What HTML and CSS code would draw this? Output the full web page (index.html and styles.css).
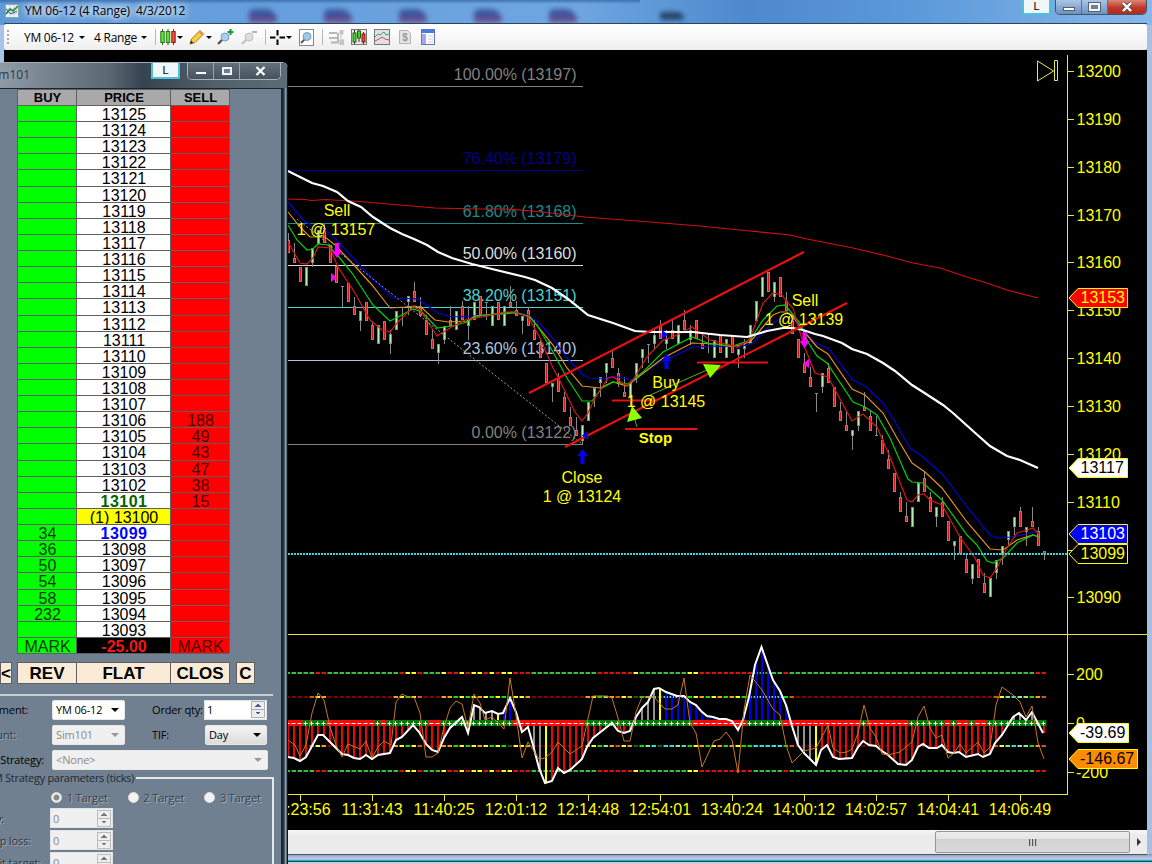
FILE: index.html
```html
<!DOCTYPE html>
<html lang="en">
<head>
    <meta charset="UTF-8">
    <title>YM 06-12 (4 Range) 4/3/2012</title>
    <link rel="stylesheet" href="styles.css">
</head>
<body>
    <div class="chart-window">
        <div class="titlebar">
            <svg class="app-icon" width="14" height="14" viewBox="0 0 14 14">
                <rect x=".5" y=".5" width="13" height="13" fill="#eef4fa" stroke="#8aa"/>
                <path d="M1 5h12M1 9h12M5 1v12M9 1v12" stroke="#b9cbe0"/>
                <path d="M1 10l4-5 3 2 5-5" stroke="#1c8a2a" stroke-width="1.6" fill="none"/>
                <path d="M1 5l5 5 6-3" stroke="#35507c" fill="none"/>
            </svg>
            <span class="title">YM 06-12 (4 Range)&nbsp; 4/3/2012</span>
            <i class="blob"></i><i class="blob"></i><i class="blob"></i><i class="blob"></i><i class="blob"></i>
            <span class="blob blob-dark"></span>
            <div class="window-buttons">
                <span class="link-button">L</span>
                <div class="controls">
                    <span class="control"><i class="min"></i></span>
                    <span class="control"><i class="max"></i></span>
                    <span class="control close"><svg width="12" height="10" viewBox="0 0 12 10"><path d="M2 1l8 8M10 1l-8 8" stroke="#555" stroke-width="4"/><path d="M2 1l8 8M10 1l-8 8" stroke="#fff" stroke-width="2.4"/></svg></span>
                </div>
            </div>
        </div>

        <div class="toolbar">
            <span class="grip"></span>
            <span class="tool-text instrument">YM 06-12</span><i class="caret"></i>
            <span class="tool-text range">4 Range</span><i class="caret"></i>
            <i class="sep"></i>
            <svg class="icon candles" width="16" height="16" viewBox="0 0 16 16">
                <path d="M2.5 0v16M8 0v16M13.5 0v16" stroke="#444"/>
                <rect x=".8" y="2.5" width="3.4" height="11" fill="#5fe03c" stroke="#2a7a18"/>
                <rect x="6.3" y="2.5" width="3.4" height="11" fill="#5fe03c" stroke="#2a7a18"/>
                <rect x="11.8" y="2.5" width="3.4" height="11" fill="#f04a3c" stroke="#96201a"/>
            </svg><i class="caret"></i>
            <svg class="icon pencil" width="16" height="16" viewBox="0 0 16 16">
                <path d="M1 15l1.5-5L11 1.5 14.5 5 6 13.5z" fill="#f8cf3c" stroke="#a87a14"/>
                <path d="M11 1.5L14.5 5 13 6.5 9.5 3z" fill="#e88a6a"/>
                <path d="M1 15l1-3.4 2.4 2.4z" fill="#333"/>
            </svg><i class="caret"></i>
            <svg class="icon zoom-in" width="17" height="16" viewBox="0 0 17 16">
                <path d="M1 15l5-5" stroke="#555" stroke-width="2.4"/>
                <circle cx="8" cy="8" r="4" fill="#a6cff0" stroke="#7a9cba"/>
                <path d="M13.5 0v6M10.5 3h6" stroke="#119c2c" stroke-width="2"/>
            </svg>
            <svg class="icon zoom-out" width="17" height="16" viewBox="0 0 17 16">
                <path d="M1 15l5-5" stroke="#c4c4c4" stroke-width="2.4"/>
                <circle cx="8" cy="8" r="4" fill="#dcdcdc" stroke="#c0c0c0"/>
                <path d="M11 3h5" stroke="#b4b4b4" stroke-width="2"/>
            </svg>
            <i class="sep"></i>
            <svg class="icon cross" width="15" height="15" viewBox="0 0 15 15">
                <path d="M7.5 0v5.5M7.5 9.5V15M0 7.500h5.500M9.500 7.500H15" stroke="#000" stroke-width="2"/>
            </svg><i class="caret"></i>
            <svg class="icon find" width="15" height="17" viewBox="0 0 15 17">
                <rect x=".5" y=".5" width="14" height="16" fill="#fff" stroke="#888"/>
                <path d="M2 14l4-4" stroke="#555" stroke-width="2"/>
                <circle cx="8" cy="7.500" r="4" fill="#9cc8ee" stroke="#7a9cba"/>
            </svg>
            <i class="sep"></i>
            <svg class="icon trader" width="15" height="15" viewBox="0 0 15 15">
                <path d="M0 3h8M0 8h8M2 12.500h8M9 3v9" stroke="#b8b8b8" stroke-width="2"/>
                <path d="M11 0h3v4h-3zM11 10h4v5h-4zM12 4v6" fill="#c4c4c4" stroke="#c4c4c4"/>
            </svg>
            <svg class="icon data" width="16" height="16" viewBox="0 0 16 16">
                <rect x=".5" y=".5" width="15" height="15" fill="#ececec" stroke="#777"/>
                <path d="M3.500 1v14M8 1v12M12.500 3v12" stroke="#333"/>
                <rect x="2" y="4" width="3" height="9" fill="#4ccf30" stroke="#1c6a10"/>
                <rect x="6.500" y="2" width="3" height="7" fill="#4ccf30" stroke="#1c6a10"/>
                <rect x="11" y="5" width="3" height="8" fill="#e8443a" stroke="#8c1812"/>
            </svg>
            <svg class="icon indicator" width="16" height="16" viewBox="0 0 16 16">
                <rect x=".5" y=".5" width="15" height="15" fill="#e2e2e2" stroke="#777"/>
                <path d="M1 8l3-3 2 1 4-3 2 3 3-1" stroke="#35a070" fill="none"/>
                <path d="M1 12l4-2 3-2 3 2 4 1" stroke="#e04848" fill="none"/>
            </svg>
            <svg class="icon dollar" width="12" height="14" viewBox="0 0 12 14">
                <path d="M.5.500h8l3 3v10H.500z" fill="#e4e4e4" stroke="#b4b4b4"/>
                <text x="6" y="11" text-anchor="middle" font-size="10" font-weight="bold" fill="#999">$</text>
            </svg>
            <svg class="icon props" width="14" height="16" viewBox="0 0 14 16">
                <rect x=".5" y=".5" width="13" height="15" fill="#fff" stroke="#6a72c0"/>
                <rect x="1" y="1" width="12" height="3" fill="#3f7fe8"/>
                <path d="M7 7h5M7 10h5M7 13h5" stroke="#c4c8ea"/>
                <rect x="1" y="5" width="4" height="10" fill="#a9a6e8"/>
            </svg>
        </div>

        <svg class="chart" width="1143" height="780" viewBox="4 50 1143 780">
            <!-- fibonacci levels -->
            <g class="fib">
                <g class="l100"><path d="M288 86.500H583"/><text x="576.500" y="80">100.00% (13197)</text></g>
                <g class="l76"><path d="M288 170.500H583"/><text x="576.500" y="164">76.40% (13179)</text></g>
                <g class="l61"><path d="M288 223.500H583"/><text x="576.500" y="217">61.80% (13168)</text></g>
                <g class="l50"><path d="M288 265.500H583"/><text x="576.500" y="259">50.00% (13160)</text></g>
                <g class="l38"><path d="M288 307.500H583"/><text x="576.500" y="301">38.20% (13151)</text></g>
                <g class="l23"><path d="M288 360.500H583"/><text x="576.500" y="354">23.60% (13140)</text></g>
                <g class="l100"><path d="M288 444.500H583"/><text x="576.500" y="438">0.00% (13122)</text></g>
            </g>

            <g id="candles"></g>

            <!-- moving averages -->
            <polyline class="ma long" points="288,199 305,199.5 312,200.5 325,199.5 360,201.5 400,205 435,208 480,209 505,209 532,211 560,214 585,217 650,222 700,226 740,230 790,235 807,239 853,248 887,256 913,263 940,268 967,277 987,283 1007,290 1038,298"/>
            <polyline class="ma blue" points="288,202 305,222 325,230 335,238 352,257 372,278 393,298 418,299 438,313 452,317 472,316 498,314 515,312 528,315 538,322 550,335 567,358 583,375 590,378 603,379 613,376 632,380 643,373 660,362 677,355 692,347 717,346 740,347 753,343 765,330 777,320 787,317 795,321 803,330 815,343 828,348 853,380 865,386 883,403 895,422 910,448 923,457 943,475 967,507 990,535 998,538 1010,537 1027,534 1033,532 1039,533"/>
            <polyline class="ma orange" points="288,212 300,227 310,237 325,237 335,245 352,263 372,285 390,308 405,307 415,306 422,308 435,320 448,322 467,321 475,316 515,312 530,317 553,345 567,368 582,386 600,388 613,382 627,386 637,378 650,368 663,358 692,343 717,344 733,347 750,342 762,328 773,315 780,312 787,312 793,317 807,335 817,347 828,354 852,389 865,395 883,413 897,438 912,463 925,472 942,488 967,522 990,549 1003,550 1017,540 1033,535 1039,537"/>
            <polyline class="ma green" points="288,225 297,240 307,250 313,249 318,244 328,245 338,256 352,273 373,305 390,321 398,317 413,309 422,312 437,328 452,326 467,322 475,317 485,315 515,313 528,316 537,325 553,352 567,378 582,401 592,401 602,388 613,382 628,384 643,372 663,352 692,337 710,344 733,346 750,340 763,320 777,306 785,305 800,323 808,342 817,356 827,363 853,402 865,407 877,415 890,438 908,479 912,482 923,483 942,500 967,535 977,545 987,561 993,563 1003,558 1017,543 1033,535 1039,537"/>
            <polyline class="ma fast" points="288,242 300,263 307,264 313,258 318,247 330,248 338,267 355,293 370,320 382,330 390,332 398,322 413,307 420,310 437,336 450,328 465,320 482,317 505,312 515,312 528,317 540,338 553,368 558,377 575,412 582,421 588,413 595,398 608,378 613,377 627,386 633,380 647,357 663,340 673,337 692,327 710,340 738,347 750,339 763,303 773,293 782,295 787,302 793,308 803,343 815,373 828,377 852,421 863,414 877,427 890,457 903,490 907,500 912,502 918,495 924,494 930,500 942,505 960,537 975,558 983,575 990,578 997,568 1007,548 1017,533 1027,530 1033,528 1039,534"/>
            <polyline class="ma slow" points="288,171 300,177 312,183 323,186 337,192 348,201 361,207 373,217 390,228 402,234 414,239 427,245 438,252 452,258 472,264 492,269 525,277 535,280 552,288 568,299 588,315 613,323 635,331 650,332 693,332 720,335 747,337 767,331 783,328 793,328 803,330 815,334 823,336 842,343 852,349 867,354 883,363 895,371 912,385 923,392 943,405 953,413 973,431 990,446 1007,456 1020,460 1038,468"/>

            <!-- drawings -->
            <path class="trade-line" d="M297 219L582 444"/>
            <path class="trend" d="M529 393L804 252M565 447L847 303M612 400.500H657M625 429H697M697 362.500H768"/>
            <path class="last-price" d="M288 554H1068"/>
            <path class="pointer-line" d="M648 396L707 370M632 410L637 427"/>
            <path class="pointer" d="M721 365L703 364 710 378zM632 406L627 422 642 418z"/>

            <path class="sell-mark" d="M335 243h4v8h3l-5 7-5-7h3zM331 273l6 4.500-6 4.500z"/>
            <path class="sell-mark" d="M802.500 332h4v9h3l-5 7-5-7h3zM809 359l-6 4.500 6 4.500z"/>
            <path class="buy-mark" d="M580.500 464h4v-8h3l-5-7-5 7h3zM588 431l-6 4.500 6 4.500z"/>
            <path class="buy-mark" d="M664.500 369h4v-8h3l-5-7-5 7h3zM662 330l6 4.500-6 4.500z"/>

            <g class="notes">
                <text x="337" y="216">Sell</text><text x="336" y="235">1 @ 13157</text>
                <text x="582" y="483">Close</text><text x="582" y="502">1 @ 13124</text>
                <text x="666" y="388">Buy</text><text x="666" y="407">1 @ 13145</text>
                <text x="805" y="306">Sell</text><text x="804" y="325">1 @ 13139</text>
                <text class="stop" x="655.500" y="443">Stop</text>
            </g>

            <!-- oscillator pane -->
            <g id="levels"></g>
            <g id="histogram"></g>
            <g id="zero"></g>
            <polyline id="trix" points="288,757 294,758 300,761 306,757 318,735 323,735 330,742 342,754 348,755 354,758 360,759 366,755 372,759 378,755 384,754 390,753 396,740 402,737 413,725 419,732 426,744 432,750 438,752 444,738 450,728 462,717 468,733 474,705 479,707 485,713 492,711 498,714 503,713 510,698 516,712 522,732 528,727 533,745 539,768 545,783 552,781 558,768 564,773 570,770 582,759 587,747 593,738 612,723 618,731 624,733 630,731 636,717 642,708 648,702 654,689 659,688 666,692 677,696 684,696 690,702 696,705 701,711 707,716 713,717 719,719 726,719 732,721 738,730 743,720 749,697 755,665 761.500,647 773,680 780,691 786,705 792,726 798,745 804,753 816,765 821,750 827,745 833,757 839,759 852,758 858,747 863,741 869,745 876,746 882,751 888,755 898,764 906,765 912,760 918,747 923,744 929,748 937,748 942,745 948,752 953,753 959,752 966,757 978,754 983,757 990,754 995,743 1002,735 1013,717 1019,713 1026,720 1032,712 1043,733"/>
            <polyline class="cci" points="288,740 295,745 300,756 306,745 312,713 318,693 324,700 330,727 336,745 342,757 348,744 360,749 366,741 372,758 378,747 384,741 391,745 396,702 402,694 408,697 414,697 420,713 426,757 432,757 438,753 444,727 450,708 456,701 462,704 468,728 474,694 480,703 485,720 492,717 504,729 510,678 516,715 522,758 528,742 539,759 545,758 552,752 558,742 570,754 582,746 587,723 593,696 607,696 612,698 618,718 624,741 630,741 636,712 642,697 654,697 665,709 672,709 678,705 684,678 690,723 696,733 702,767 714,741 720,739 726,732 732,740 738,773 744,710 750,675 762,690 773,709 780,715 786,745 792,763 804,751 816,748 822,737 828,725 833,748 840,753 847,752 852,749 858,733 864,705 870,728 876,737 882,754 888,755 900,752 912,742 918,717 924,706 930,728 936,738 942,735 948,758 954,753 960,744 966,753 978,742 984,753 990,747 996,705 1002,687 1013,695 1020,702 1026,717 1032,706 1038,743 1044,759"/>

            <!-- axes -->
            <path class="axis" d="M1067.500 55V794M288 634.500H1147M288 794.500H1068"/>
            <path class="axis" id="ticks"/>
            <path class="go-last" d="M1037.500 61V81L1053.500 71zM1054.500 60.500h3v20h-3z"/>
            <g id="labels" class="labels"></g>

            <g class="tags">
                <path d="M1069 298l9-9.500h49.500v19H1078z" fill="#f00"/><text x="1080.500" y="303" fill="#ff0">13153</text>
                <path d="M1069 468l9-9.500h49.500v19H1078z" fill="#fff"/><text x="1080.500" y="473" fill="#000">13117</text>
                <path d="M1069 534l9-9.500h49.500v19H1078z" fill="#00f"/><text x="1080.500" y="539" fill="#fff">13103</text>
                <path d="M1069 554l9-9.500h49.500v19H1078z" fill="#000"/><text x="1080.500" y="559" fill="#ff0">13099</text>
                <path d="M1069 733l9-9.500h50.500v19H1078z" fill="#fff"/><text x="1080" y="738" fill="#000">-39.69</text>
                <path d="M1069 759l9-9.500h59.500v19H1078z" fill="#ff8c00"/><text x="1080" y="764" fill="#000">-146.67</text>
            </g>
        </svg>

        <div class="scrollbar">
            <div class="thumb"><i></i><i></i><i></i></div>
            <span class="arrow"></span>
        </div>
    </div>

    <div class="dom-window">
        <div class="dom-title">
            <span class="account">Sim101</span>
            <span class="link-button">L</span>
            <div class="controls">
                <span class="control"><i class="min"></i></span>
                <span class="control"><i class="max"></i></span>
                <span class="control close"><svg width="11" height="10" viewBox="0 0 11 10"><path d="M1.500 1l8 8M9.500 1l-8 8" stroke="#fff" stroke-width="2.200"/></svg></span>
            </div>
        </div>
        <div class="dom-body">
            <div class="ladder" id="ladder">
                <b>BUY</b><b>PRICE</b><b>SELL</b>
            </div>
            <div class="actions">
                <span class="more">&lt;</span>
                <span class="rev">REV</span><span class="flat">FLAT</span><span class="clos">CLOS</span>
                <span class="c">C</span>
            </div>
            <div class="form">
                <div class="row r1">
                    <label>Instrument:</label>
                    <span class="combo short">YM 06-12<i class="caret"></i></span>
                    <span class="name">Order qty:</span>
                    <span class="spin">1<i class="updown"></i></span>
                </div>
                <div class="row r2">
                    <label>Account:</label>
                    <span class="combo short disabled">Sim101<i class="caret"></i></span>
                    <span class="name">TIF:</span>
                    <span class="combo tif">Day<i class="caret"></i></span>
                </div>
                <div class="row r3">
                    <label>ATM Strategy:</label>
                    <span class="combo wide disabled">&lt;None&gt;<i class="caret"></i></span>
                </div>
            </div>
            <div class="group">
                <div class="legend"><span>ATM Strategy parameters (ticks)</span></div>
                <div class="params">
                    <div class="targets">
                        <span><i class="radio on"></i>1 Target</span>
                        <span><i class="radio"></i>2 Target</span>
                        <span><i class="radio"></i>3 Target</span>
                    </div>
                    <div class="row p1"><label>Order qty:</label><span class="spin disabled">0<i class="updown"></i></span></div>
                    <div class="row p2"><label>Stop loss:</label><span class="spin disabled">0<i class="updown"></i></span></div>
                    <div class="row p3"><label>Profit target:</label><span class="spin disabled">0<i class="updown"></i></span></div>
                </div>
            </div>
        </div>
    </div>
    <script src="chart.js"></script>
</body>
</html>
```
FILE: styles.css
```css
* {
    box-sizing: border-box;
}

body {
    margin: 0;
    width: 1152px;
    height: 864px;
    overflow: hidden;
    font-family: "Open Sans", "Noto Sans", sans-serif;
    font-size: 12px;
    color: #000;
    background: #5b93d2;
}

svg {
    display: block;
    flex: none;
}

svg text {
    font-family: "Liberation Sans", Arial, sans-serif;
}

.chart-window {
    position: relative;
    width: 1152px;
    height: 864px;
    padding: 0 5px 0 4px;
    background:
        linear-gradient(#8094b0, #bccbe2 4px, #a9bcd8 6px, #18b0d8 6px, #18b0d8 7px, #20485c 7px, #20485c 8px, #c8d0d4 8px) 0 854px / 100% 10px no-repeat,
        linear-gradient(#1c4a8c88, transparent 4px) 0 0 / 640px 25px no-repeat,
        linear-gradient(90deg, #5f9ad8, #6ea6e0 50%, #4e89cd 65%, #5c9ada 80%, #88b8ea) 0 0 / 100% 25px no-repeat,
        linear-gradient(90deg, #a8c4e8 0, #86abd8 50%, #a9bfe2 100%);
}

.titlebar {
    height: 24px;
    display: flex;
    align-items: flex-start;
    border-bottom: 1px solid #274668;
    overflow: hidden;
}

.app-icon {
    margin: 4px 6px 0 1px;
}

.title {
    width: 181px;
    padding: 2px 0;
    line-height: 17px;
    letter-spacing: -.1px;
    white-space: nowrap;
    text-shadow: 0 0 6px #fff, 0 0 8px #fff, 0 0 10px #d8ecff;
}

.blob {
    width: 28px;
    height: 14px;
    flex: none;
    margin: 9px 23px 0 24px;
    border-radius: 6px 14px 3px 3px;
    background: linear-gradient(#2c4c94, #3b3a88 50%, #8c4474);
    filter: blur(2.5px);
    opacity: .8;
}

.title + .blob {
    margin-left: 43px;
}

.blob-dark {
    height: 8px;
    width: 24px;
    margin: 12px 0 0 60px;
    background: #16304c;
}

.window-buttons {
    display: flex;
    margin-left: auto;
}

.link-button {
    width: 29px;
    height: 15px;
    background: #f1f6f8;
    border: 2px solid #4fc0dc;
    border-top: 0;
    border-radius: 1px;
    font: 11px/12px "Liberation Sans", Arial, sans-serif;
    text-align: center;
}

.controls {
    display: flex;
    border: 1px solid #42536c;
    border-top: 0;
    border-radius: 0 0 5px 5px;
    overflow: hidden;
}

.window-buttons .controls {
    width: 92px;
    height: 15px;
    margin-left: 4px;
}

.control {
    width: 26px;
    display: flex;
    align-items: center;
    justify-content: center;
    border-right: 1px solid #5b6f8a;
    background: linear-gradient(#a9c6e6, #6c91bf);
}

.control.close {
    flex: 1;
    border-right: 0;
}

.titlebar .close {
    background: linear-gradient(#d98878, #c03626 55%, #a83020);
}

.min {
    width: 12px;
    height: 4px;
    border: 1px solid #55606c;
    background: #fff;
    margin-top: 3px;
}

.max {
    width: 11px;
    height: 8px;
    border: 2px solid #f4f4f4;
    outline: 1px solid #55606c;
    background: #6f7f90;
}

.toolbar {
    height: 26px;
    display: flex;
    align-items: center;
    background: linear-gradient(#fff, #f8f8f8 50%, #eee);
    border-radius: 3px;
    overflow: hidden;
}

.grip {
    width: 2px;
    height: 15px;
    margin: 0 14px 0 3px;
    background: repeating-linear-gradient(#aaa 0 2px, transparent 2px 4px);
}

.toolbar > * {
    flex: none;
}

.tool-text {
    white-space: nowrap;
    letter-spacing: -.25px;
}

.instrument {
    width: 55px;
    margin-left: 1px;
}

.range {
    width: 47px;
    margin-left: 9px;
}

.caret {
    width: 0;
    height: 0;
    border: 3px solid transparent;
    border-top-color: #000;
    border-bottom: 0;
}

.sep {
    width: 1px;
    height: 16px;
    background: #b8b8b8;
    margin: 0 4px 0 8px;
}

.icon + .caret { margin-left: 1px; }
.pencil { margin-left: 6px; }
.zoom-in { margin-left: 5px; }
.zoom-out { margin-left: 7px; }
.zoom-out + .sep { margin-left: 7px; }
.find { margin-left: 7px; }
.find + .sep { margin-right: 6px; }
.data { margin-left: 7px; }
.indicator { margin-left: 7px; }
.dollar { margin-left: 9px; }
.props { margin-left: 10px; }

/* chart */

.chart {
    background: #000;
    font-size: 16px;
}

.fib text {
    text-anchor: end;
}

.fib path {
    shape-rendering: crispEdges;
}

.l100 { fill: #808080; stroke: #808080; }
.l76 { fill: #00008b; stroke: #00008b; }
.l61 { fill: #1c8a8a; stroke: #1c8a8a; }
.l50 { fill: #dcdcdc; stroke: #dcdcdc; }
.l38 { fill: #48d1cc; stroke: #48d1cc; }
.l23 { fill: #b0c4de; stroke: #b0c4de; }

.fib text {
    stroke: none;
}

.wick {
    stroke: #888;
}

.body {
    stroke: #888;
}

.body.up { fill: #b4f0b0; }
.body.down { fill: #d01818; }

.ma {
    fill: none;
    stroke-width: 1.2;
}

.long { stroke: #d01010; }
.blue { stroke: #0000d8; }
.orange { stroke: #e09020; }
.green { stroke: #00d000; }
.fast { stroke: #d81818; }
.slow { stroke: #fff; stroke-width: 2.2; }

.trade-line {
    stroke: #a0a0a0;
    stroke-dasharray: 2 2;
}

.trend {
    stroke: #e81010;
    stroke-width: 2.2;
}

.last-price {
    stroke: #30dada;
    stroke-width: 2;
    stroke-dasharray: 2 1;
}

.pointer-line { stroke: #58b010; }
.pointer { fill: #8cff00; }
.sell-mark { fill: #f0f; }
.buy-mark { fill: #00f; }

.notes text {
    fill: #ff0;
    text-anchor: middle;
}

.notes .stop {
    font-size: 15px;
    font-weight: bold;
}

#trix {
    fill: none;
    stroke: #fff;
    stroke-width: 2;
}

.cci {
    fill: none;
    stroke: #c87818;
}

.axis, .go-last {
    fill: none;
    stroke: #e8e840;
}

.axis {
    shape-rendering: crispEdges;
}

.labels text {
    fill: #ff0;
}

.labels .time {
    text-anchor: middle;
}

.tags path {
    stroke: #ff0;
}

/* horizontal scrollbar */

.scrollbar {
    height: 25px;
    display: flex;
    justify-content: flex-end;
    align-items: center;
    background: linear-gradient(#f6f6f6, #ebebeb 6px);
    border-bottom: 1px solid #46566c;
}

.thumb {
    width: 195px;
    height: 22px;
    display: flex;
    gap: 1px;
    align-items: center;
    justify-content: center;
    border: 1px solid #949494;
    border-radius: 2px;
    background: linear-gradient(#ececec, #e4e4e4 35%, #d2d2d4 36%, #dadadc);
}

.thumb i {
    width: 2px;
    height: 7px;
    border-left: 1px solid #555;
    background: #bbb;
}

.arrow {
    border: 4px solid transparent;
    border-left-color: #333;
    border-right: 0;
    margin: 0 6px 0 7px;
}

/* order entry window */

.dom-window {
    position: absolute;
    left: 0;
    top: 62px;
    width: 288px;
    height: 802px;
    overflow: hidden;
    padding-right: 7px;
    border-top: 1px solid #a4afb8;
    border-top-right-radius: 6px;
    background: linear-gradient(90deg, #16222e 282px, #2c3e4c 284px, #a8b8c8 286px, #1c2834 287px, #000);
}

.dom-title {
    height: 25px;
    margin-right: -5px;
    display: flex;
    align-items: flex-start;
    background: linear-gradient(90deg, #8d9aa6, #5a6874 38%, #364350 50%, #52606c 75%, #5d6b76);
}

.account {
    width: 30px;
    margin-right: 121px;
    display: flex;
    justify-content: flex-end;
    line-height: 24px;
    color: #2c3742;
    text-shadow: 0 0 8px #a8b4c0;
}

.dom-title .controls {
    width: 94px;
    height: 17px;
    margin-left: 8px;
    border-color: #a8b2bc;
}

.dom-title .link-button {
    width: 29px;
    height: 16px;
    line-height: 14px;
    margin-right: -1px;
}

.dom-title .control {
    background: linear-gradient(#64717d, #46535f);
    border-color: #9aa4ae;
}

.dom-title .max {
    width: 10px;
    height: 8px;
}

.dom-body {
    height: 776px;
    background: #708090;
    border-top: 1px solid #1c2630;
    overflow: hidden;
}

.ladder {
    width: 213px;
    height: 565px;
    margin-left: 17px;
    display: grid;
    grid-template-columns: 59px 94px 59px;
    grid-template-rows: 16px repeat(34, minmax(0, 1fr));
    border: 1px solid #606060;
    border-width: 1px 0 0 1px;
    font: 16px/17px "Liberation Sans", Arial, sans-serif;
    text-align: center;
}

.ladder > * {
    border: 1px solid #606060;
    border-width: 0 1px 1px 0;
    overflow: hidden;
    white-space: nowrap;
    padding-left: 1px;
}

.ladder > b {
    background: #a9a9a9;
    font-size: 13px;
    line-height: 16px;
}

.ladder .buy { background: #0f0; color: #003800; }
.ladder .price { background: #fff; }
.ladder .sell { background: #f00; color: #480000; }
.ladder .ask { color: #006400; font-weight: bold; letter-spacing: .5px; }
.ladder .bid { color: #00f; font-weight: bold; letter-spacing: .5px; }
.ladder .position { background: #ff0; }
.ladder .pnl { background: #000; color: #f01818; font-weight: bold; }

.actions {
    display: flex;
    height: 22px;
    margin-top: 8px;
    font: bold 17px/21px "Liberation Sans", Arial, sans-serif;
    text-align: center;
}

.actions span {
    background: #faebd7;
    border: 1px solid #606060;
}

.more {
    width: 12px;
    margin-right: 5px;
    display: flex;
    justify-content: flex-end;
}

.rev { width: 60px; }
.flat { width: 95px; margin-left: -1px; }
.clos { width: 60px; margin-left: -1px; }
.c { width: 19px; margin-left: 6px; }

.form {
    width: 273px;
    margin-top: 10px;
    padding-top: 3px;
    border-top: 2px solid #c4ccd4;
}

.form, .group {
    font-size: 11px;
    letter-spacing: -.15px;
}

.row {
    display: flex;
    height: 21px;
    align-items: center;
    margin-bottom: 4px;
    white-space: nowrap;
}

.row label {
    width: 52px;
    flex: none;
    display: flex;
    justify-content: flex-end;
}

.r1 label { padding-right: 24px; }
.r2 label { padding-right: 36px; }
.r3 label { padding-right: 8px; }
.r2 label, .group label { color: #2c3640; text-shadow: 1px 1px #a0acb8; }

.combo {
    height: 20px;
    display: flex;
    align-items: center;
    justify-content: space-between;
    padding: 0 5px 0 3px;
    background: #fff;
    border: 1px solid #e8e8e8;
    border-radius: 2px;
}

.combo .caret, .combo.disabled .caret {
    border-width: 4px 4px 0;
}

.short { width: 73px; }
.wide { width: 216px; }
.tif { width: 62px; background: linear-gradient(#f4f4f4, #dcdcdc); }
.name { width: 53px; margin-left: 27px; }
.r1 .name { width: 52px; }

.disabled {
    background: #f0f0f0;
    color: #8a8a8a;
}

.disabled .caret {
    border-top-color: #999;
}

.spin {
    width: 63px;
    height: 20px;
    display: flex;
    justify-content: space-between;
    align-items: center;
    padding: 0 1px 0 2px;
    background: #fff;
    border: 1px solid #dfe4e8;
}

.spin.disabled {
    background: #f0f0f0;
}

.updown {
    width: 14px;
    height: 17px;
    border: 1px solid #b0b0b0;
    background:
        conic-gradient(from 135deg at 50% 0, #4a5c9c 90deg, transparent 0) 50% 3px / 6px 3px no-repeat,
        conic-gradient(from -45deg at 50% 100%, #4a5c9c 90deg, transparent 0) 50% 11px / 6px 3px no-repeat,
        linear-gradient(#eee 7px, #aaa 7px, #aaa 8px, #eee 8px);
}

.updown {
    background:
        conic-gradient(from 135deg at 50% 0, #4a5c9c 90deg, transparent 0) 50% 2px / 6px 3px no-repeat,
        conic-gradient(from -45deg at 50% 100%, #4a5c9c 90deg, transparent 0) 50% 10px / 6px 3px no-repeat,
        linear-gradient(#eee 7px, #aaa 7px, #aaa 8px, #eee 8px);
}

.disabled .updown {
    filter: grayscale(1) opacity(.8);
}

.group {
    width: 274px;
    margin-top: -4px;
}

.legend {
    display: flex;
    align-items: center;
    height: 15px;
    color: #202a34;
    white-space: nowrap;
    letter-spacing: -.3px;
}

.legend span {
    width: 134px;
    display: flex;
    justify-content: flex-end;
}

.legend::after {
    content: "";
    flex: 1;
    height: 2px;
    margin-left: 2px;
    background: #e4e8ec;
}

.params {
    height: 100px;
    margin-top: -7px;
    padding-top: 8px;
    border-right: 2px solid #e4e8ec;
}

.targets {
    display: flex;
    height: 22px;
    padding-left: 51px;
    align-items: center;
    color: #35404c;
    text-shadow: 1px 1px #a8b4c0;
}

.targets span {
    width: 76.5px;
    flex: none;
    display: flex;
    align-items: center;
    gap: 5px;
    white-space: nowrap;
}

.radio {
    width: 11px;
    height: 11px;
    border: 1px solid #ddd;
    border-radius: 50%;
    background: #f2f2f2;
}

.radio.on {
    background: radial-gradient(#888 2.500px, #f2f2f2 3.500px);
}

.params .row {
    height: 20px;
    margin-bottom: 2px;
}

.params .row label {
    width: 50px;
}

.p1 label { padding-right: 46px; }
.p2 label { padding-right: 19px; }
.p3 label { padding-right: 9px; }
```
FILE: chart.js
```js
const NS = "http://www.w3.org/2000/svg";
const FIRST_X = 288.5;
const STEP = 6;

// [direction, high, body top, body bottom, low]
const candles = [
    ["d",233,240,253,253], ["d",243,258,263,263], ["d",267,267,282,282], ["u",267,267,286,286],
    ["u",248,248,263,267], ["u",230,230,244,244], ["d",224,228,243,243], ["d",245,245,263,263],
    ["d",266,266,283,283], ["x",286,286,286,307], ["d",283,283,302,302], ["d",297,306,315,315],
    ["u",311,311,321,331], ["d",302,302,321,321], ["d",321,325,340,340], ["u",325,325,344,344],
    ["d",321,321,340,340], ["u",330,334,344,354], ["u",311,311,330,330], ["x",307,307,307,326],
    ["u",296,296,302,315], ["d",282,291,302,302], ["d",297,306,316,316], ["d",315,320,335,335],
    ["d",330,339,349,349], ["u",344,344,353,364], ["u",326,326,340,344], ["d",306,320,326,326],
    ["u",311,311,330,330], ["d",301,306,320,320], ["u",306,320,326,340], ["u",302,302,320,320],
    ["d",296,296,315,315], ["x",302,302,302,320], ["u",306,306,326,326], ["d",302,302,320,320],
    ["u",306,306,326,326], ["d",286,302,307,307], ["d",301,310,316,316], ["u",316,316,321,334],
    ["d",307,310,326,326], ["d",320,330,340,340], ["d",338,344,358,358], ["d",363,363,383,383],
    ["u",383,383,387,402], ["d",373,378,392,392], ["d",392,397,412,412], ["d",407,417,426,426],
    ["d",417,430,436,436], ["u",425,425,441,444], ["u",402,402,421,421], ["u",388,388,397,407],
    ["u",377,377,383,397], ["u",363,363,373,383], ["d",350,358,368,368], ["d",368,373,383,387],
    ["d",377,392,397,397], ["u",383,383,398,407], ["u",363,363,377,383], ["u",349,349,358,368],
    ["x",344,344,344,363], ["u",330,335,344,349], ["d",320,325,339,339], ["u",330,339,344,349],
    ["d",320,330,339,339], ["u",325,325,344,344], ["d",310,320,330,330], ["u",325,330,340,345],
    ["d",320,320,339,339], ["d",334,343,349,349], ["x",334,334,334,353], ["u",340,340,358,358],
    ["d",335,335,353,353], ["u",339,339,358,358], ["d",335,335,353,353], ["u",349,349,355,368],
    ["u",339,345,349,358], ["u",325,325,344,344], ["u",301,301,321,321], ["u",277,277,297,297],
    ["d",272,272,292,292], ["u",282,282,297,302], ["d",277,277,297,297], ["d",292,301,311,311],
    ["d",315,315,334,334], ["d",339,339,358,358], ["d",353,363,373,373], ["d",367,377,387,387],
    ["x",393,393,393,412], ["u",373,373,387,393], ["d",363,368,383,383], ["d",387,387,407,407],
    ["d",402,411,421,421], ["d",411,425,431,431], ["u",430,430,436,450], ["u",411,411,426,431],
    ["d",392,407,411,411], ["d",411,416,431,431], ["x",416,435,435,435], ["d",435,440,454,454],
    ["d",450,459,469,469], ["d",473,473,492,492], ["d",492,497,512,512], ["d",502,516,522,522],
    ["u",507,507,527,527], ["u",483,483,502,502], ["d",472,478,492,492], ["d",492,497,512,512],
    ["u",507,507,517,527], ["d",497,502,517,517], ["d",521,521,541,541], ["u",541,541,546,560],
    ["d",536,536,554,554], ["d",554,559,573,573], ["u",564,564,579,584], ["d",559,559,578,578],
    ["d",573,583,593,593], ["u",578,578,597,597], ["u",560,560,573,579], ["u",546,546,555,565],
    ["u",531,531,540,546], ["u",517,517,527,535], ["d",507,511,527,527], ["u",527,527,532,546],
    ["d",507,521,527,527], ["d",527,531,546,546], ["d",551,551,554,560]
];

function add(parent, name, attrs, text) {
    const el = document.createElementNS(NS, name);
    for (const key in attrs) el.setAttribute(key, attrs[key]);
    if (text !== undefined) el.textContent = text;
    document.getElementById(parent).appendChild(el);
    return el;
}

candles.forEach(([dir, high, top, bottom, low], i) => {
    const x = FIRST_X + i * STEP;
    add("candles", "path", { class: "wick", d: `M${x} ${high}V${low}` });
    if (dir === "x") {
        add("candles", "path", { class: "wick", d: `M${x - 1.5} ${top + 0.5}h3` });
    } else {
        add("candles", "rect", {
            class: "body " + (dir === "u" ? "up" : "down"),
            x: x - 1, y: top + 0.5, width: 2, height: bottom - top - 1
        });
    }
});

// level colours are stored as runs: colour letter + bar count
const palette = {
    g: "#38c038", r: "#e01010", y: "#ffff20", d: "#800000", o: "#f0a020",
    k: "#e05010", l: "#10e010", p: "#90e890", c: "#30e0e0", n: "#106010"
};

function expand(runs) {
    return runs.split(" ").map(r => r[0].repeat(Number(r.slice(1)))).join("");
}

const outer = expand("g5 r2 g12 r1 y2 r1 g3 y1 r2 y1 r1 y2 r1 y1 r1 y2 r3 g11 r6 y1 g8 y2 r9 g5 r1 g41 r2");
const inner = expand("d4 k1 y1 o1 d11 o1 y1 l1 y1 k1 d3 o2 l1 y1 l1 y1 o1 y1 l1 y1 l1 n1 y2 o1 d9 o1 y1 l1 p1 o1 k1 y1 o1 n1 l1 p1 c1 n1 c2 p1 c1 l1 y1 o1 l1 y1 o1 l1 o1 y1 l2 c5 l1 k1 d33 k1 y1 p1 c1 p2 l1 o1 k1");

[[673, outer], [697, inner], [746, inner], [771, outer]].forEach(([y, colours]) => {
    [...colours].slice(0, candles.length).forEach((c, i) => {
        const x = FIRST_X + i * STEP;
        add("levels", "path", { d: `M${Math.max(288, x - 3)} ${y}H${x + 1.5}`, stroke: palette[c], "stroke-width": 2 });
    });
});

// histogram follows the white line
const line = document.getElementById("trix").getAttribute("points").split(" ").map(p => p.split(",").map(Number));

function lineY(x) {
    for (let i = 1; i < line.length; i++) {
        if (x <= line[i][0]) {
            const [x0, y0] = line[i - 1];
            const [x1, y1] = line[i];
            return y0 + (y1 - y0) * (x - x0) / (x1 - x0);
        }
    }
    return line[line.length - 1][1];
}

const gray = [31, 32, 33, 34, 41, 42, 59, 60, 61, 85, 86, 87, 120, 121, 122, 123, 124];
const yellow = [35, 43, 62, 88];

for (let i = 0; i < candles.length; i++) {
    const x = FIRST_X + i * STEP - 0.5;
    const y = lineY(x);
    if (y > 719 && y < 727) continue;
    let colour = y > 723 ? "#e80808" : "#0000e8";
    if (gray.includes(i)) colour = "#909090";
    if (yellow.includes(i)) colour = "#ffff00";
    add("histogram", "path", { d: `M${x} 723V${y}`, stroke: colour, "stroke-width": 2 });
}

const crossed = [[3, 6], [15, 15], [17, 23], [26, 37], [50, 67], [77, 82], [96, 96], [104, 109], [111, 111], [114, 114], [117, 126]];

add("zero", "path", { d: "M288 723H1045", stroke: "#ff0808", "stroke-width": 6 });
crossed.forEach(([from, to]) => {
    add("zero", "path", { d: `M${FIRST_X + from * STEP - 4} 723H${FIRST_X + to * STEP + 2}`, stroke: "#087808", "stroke-width": 6 });
});
for (let i = 0; i < candles.length; i++) {
    const x = FIRST_X + i * STEP - 1;
    const cross = crossed.some(([from, to]) => i >= from && i <= to);
    add("zero", "path", { d: `M${Math.max(288, x - 2)} 723.5H${x + 2}` + (cross ? `M${x} 721.5v4` : ""), stroke: "#fff" });
}

// axes
let ticks = "";
for (let i = 0; i < 12; i++) {
    const y = Math.round(71 + i * 47.86);
    ticks += `M1068 ${y + 0.5}h6`;
    if (i !== 10) add("labels", "text", { x: 1076.5, y: y + 6 }, 13200 - i * 10);
}
[[674, "200"], [723, "0"], [772, "-200"]].forEach(([y, label]) => {
    ticks += `M1068 ${y + 0.5}h6`;
    add("labels", "text", { x: 1076, y: y + 6 }, label);
});
["11:23:56", "11:31:43", "11:40:25", "12:01:12", "12:14:48", "12:54:01", "13:40:24", "14:00:12", "14:02:57", "14:04:41", "14:06:49"].forEach((time, i) => {
    const x = 300.5 + i * 72;
    ticks += `M${x} 795v6`;
    add("labels", "text", { class: "time", x: x - 0.5, y: 815 }, time);
});
document.getElementById("ticks").setAttribute("d", ticks);

// price ladder
const bids = { 13099: 34, 13098: 36, 13097: 50, 13096: 54, 13095: 58, 13094: 232 };
const asks = { 13106: 188, 13105: 49, 13104: 43, 13103: 47, 13102: 38, 13101: 15 };
const marks = { 13101: " ask", 13100: " position", 13099: " bid" };
let rows = "";
for (let p = 13125; p >= 13093; p--) {
    rows += `<span class="buy">${bids[p] || ""}</span>`;
    rows += `<span class="price${marks[p] || ""}">${p === 13100 ? "(1) " : ""}${p}</span>`;
    rows += `<span class="sell">${asks[p] || ""}</span>`;
}
rows += '<span class="buy">MARK</span><span class="price pnl">-25.00</span><span class="sell">MARK</span>';
document.getElementById("ladder").insertAdjacentHTML("beforeend", rows);
```
